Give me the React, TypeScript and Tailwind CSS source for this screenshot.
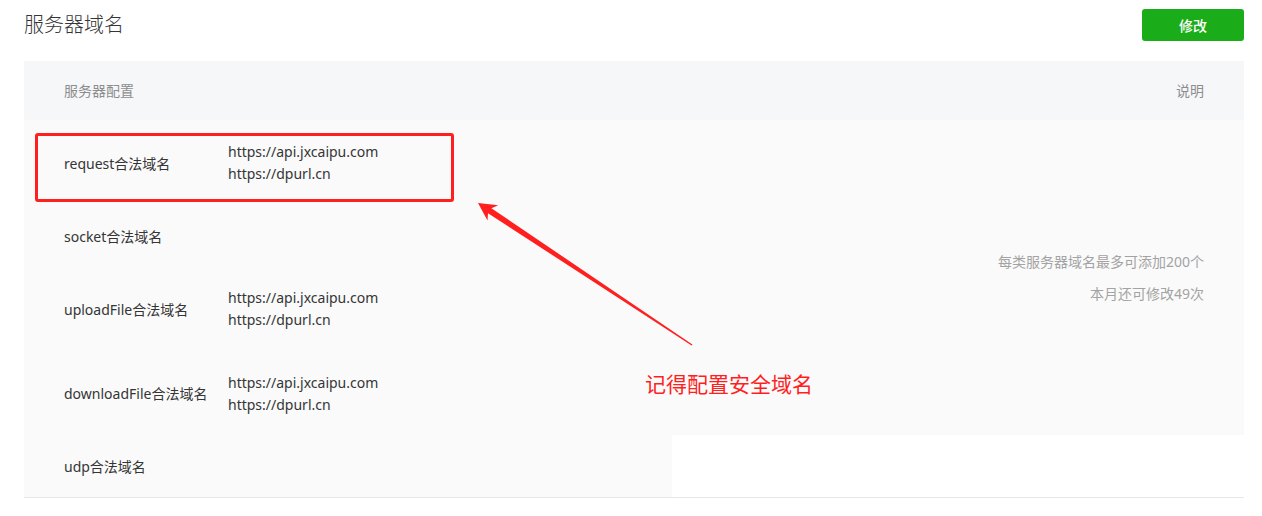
import React from "react";

const font = { fontFamily: '"Noto Sans", "Noto Sans CJK SC", sans-serif' };

const rows: { label: string; urls: string[]; h: string }[] = [
  { label: "request合法域名", urls: ["https://api.jxcaipu.com", "https://dpurl.cn"], h: "h-[86px]" },
  { label: "socket合法域名", urls: [], h: "h-[60px]" },
  { label: "uploadFile合法域名", urls: ["https://api.jxcaipu.com", "https://dpurl.cn"], h: "h-[86px]" },
  { label: "downloadFile合法域名", urls: ["https://api.jxcaipu.com", "https://dpurl.cn"], h: "h-[83px]" },
];

export default function App() {
  return (
    <div className="relative w-full h-[516px] bg-white text-[#353535]" style={font}>
      <div className="flex items-center justify-between pl-6 pr-[18px] pt-[9px]">
        <h2 className="text-[20px] leading-8 font-light text-[#353535]">服务器域名</h2>
        <button className="w-[102px] h-8 rounded-[3px] bg-[#1aad19] text-white text-[14px] font-medium">
          修改
        </button>
      </div>
      <div className="ml-6 mr-[18px] mt-5 border-b border-[#e7e7e7]">
        <table className="w-full table-fixed border-collapse bg-white text-[14px]">
          <colgroup>
            <col className="w-[204px]" />
            <col className="w-[444px]" />
            <col />
          </colgroup>
          <thead>
            <tr className="h-[59px] bg-[#f6f7f9] text-[#8d8d8d]">
              <th className="pl-10 text-left font-normal">服务器配置</th>
              <th></th>
              <th className="pr-10 text-right font-normal">说明</th>
            </tr>
          </thead>
          <tbody>
            {rows.map((r, i) => (
              <tr key={r.label} className={r.h}>
                <td className="bg-[#fafafa] pl-10 align-middle whitespace-nowrap">{r.label}</td>
                <td className="bg-[#fafafa] align-middle leading-[22px]">
                  {r.urls.map((u) => (
                    <div key={u}>{u}</div>
                  ))}
                </td>
                {i === 0 && (
                  <td rowSpan={4} className="bg-[#fafafa] pr-10 text-right align-middle text-[14px] text-[#a3a3a3]">
                    <p className="leading-[22px]">每类服务器域名最多可添加200个</p>
                    <p className="mt-[10px] leading-[22px]">本月还可修改49次</p>
                  </td>
                )}
              </tr>
            ))}
            <tr className="h-[62px]">
              <td className="bg-[#fafafa] pl-10 align-middle">udp合法域名</td>
              <td className="bg-[#fafafa]"></td>
            </tr>
          </tbody>
        </table>
      </div>

      {/* annotation box */}
      <div className="absolute left-[35px] top-[133px] w-[419px] h-[69px] border-[3px] border-[#ff1f1f] rounded-[3px]" />

      {/* annotation arrow */}
      <svg className="absolute left-0 top-0 pointer-events-none" width="1262" height="516">
        <polygon
          points="478,203 487.5,220.5 488,213.2 691.6,345.6 692.4,344.4 491.4,208.2 498.2,205.2"
          fill="#ff1f1f"
        />
      </svg>

      <div className="absolute left-[645px] top-[370px] text-[21px] leading-[28px] text-[#ff1f1f]">
        记得配置安全域名
      </div>
    </div>
  );
}
